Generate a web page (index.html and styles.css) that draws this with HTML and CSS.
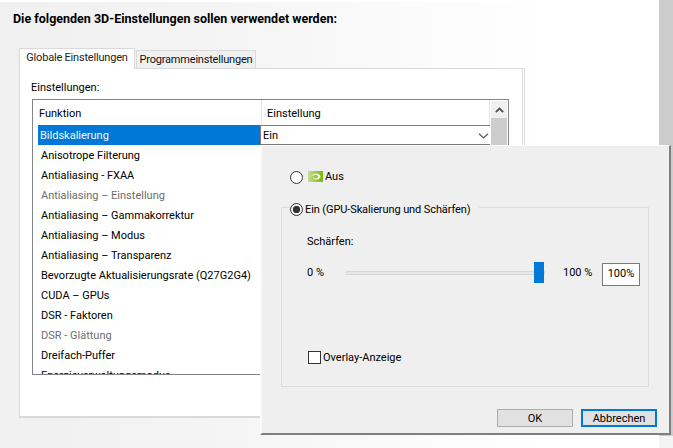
FILE: index.html
```html
<!DOCTYPE html>
<html lang="de">
<head>
<meta charset="utf-8">
<title>3D-Einstellungen</title>
<link rel="stylesheet" href="styles.css">
</head>
<body>
<div class="page">
  <main class="main">
    <h1 class="heading">Die folgenden 3D-Einstellungen sollen verwendet werden:</h1>
    <div class="tabs">
      <div class="tab tab-active">Globale Einstellungen</div>
      <div class="tab">Programmeinstellungen</div>
    </div>
    <section class="panel">
      <div class="panel-label">Einstellungen:</div>
      <div class="list">
        <div class="list-body">
          <div class="list-head">
            <div class="col-func">Funktion</div>
            <div class="col-set">Einstellung</div>
          </div>
          <div class="row-selected">
            <div class="sel-name">Bildskalierung</div>
            <div class="combo">
              <span>Ein</span>
              <svg class="chevron" width="11" height="6" viewBox="0 0 11 6"><path d="M1 0.8 L5.5 5 L10 0.8" fill="none" stroke="#555" stroke-width="1.2"/></svg>
            </div>
          </div>
          <div class="row">Anisotrope Filterung</div>
          <div class="row">Antialiasing - FXAA</div>
          <div class="row row-off">Antialiasing – Einstellung</div>
          <div class="row">Antialiasing – Gammakorrektur</div>
          <div class="row">Antialiasing – Modus</div>
          <div class="row">Antialiasing – Transparenz</div>
          <div class="row">Bevorzugte Aktualisierungsrate (Q27G2G4)</div>
          <div class="row">CUDA – GPUs</div>
          <div class="row">DSR - Faktoren</div>
          <div class="row row-off">DSR - Glättung</div>
          <div class="row">Dreifach-Puffer</div>
          <div class="row row-clipped">Energieverwaltungsmodus</div>
        </div>
        <div class="scrollbar">
          <div class="scroll-up">
            <svg width="9" height="6" viewBox="0 0 9 6"><path d="M0.8 5.2 L4.5 1.5 L8.2 5.2" fill="none" stroke="#505050" stroke-width="1.8"/></svg>
          </div>
          <div class="scroll-thumb"></div>
        </div>
      </div>
    </section>
  </main>
  <aside class="side"><div class="side-strip"></div></aside>
</div>

<div class="dialog">
  <div class="opt-off">
    <span class="radio"></span>
    <svg class="nv" width="15" height="11" viewBox="0 0 15 11">
      <defs><linearGradient id="nvg" x1="0" x2="1" y1="0" y2="0"><stop offset="0" stop-color="#c4dc9a"/><stop offset="1" stop-color="#76b900"/></linearGradient></defs>
      <rect width="15" height="11" fill="url(#nvg)"/>
      <path d="M3 5.5 C5 2.5 8 1.8 11 3.2 C13 4.4 13 6.6 11 7.8 C8.5 9 6 8.6 4.5 7 C6 7.8 8.5 7.6 9.8 6.4 C10.6 5.4 9.6 4.2 8 4 C6.3 3.8 4.6 4.4 3 5.5 Z" fill="#eef6dd"/>
    </svg>
    <span>Aus</span>
  </div>
  <fieldset class="group">
    <legend class="legend"><span class="radio radio-on"></span><span class="legend-text">Ein (GPU-Skalierung und Schärfen)</span></legend>
    <div class="group-body">
      <div class="sharpen-label">Schärfen:</div>
      <div class="slider-row">
        <span class="min">0 %</span>
        <div class="slider"><div class="track"></div><div class="thumb"></div></div>
        <span class="max">100 %</span>
        <div class="value">100%</div>
      </div>
      <div class="overlay-row"><span class="check"></span><span>Overlay-Anzeige</span></div>
    </div>
  </fieldset>
  <div class="buttons">
    <div class="btn">OK</div>
    <div class="btn btn-default">Abbrechen</div>
  </div>
</div>
</body>
</html>
```
FILE: styles.css
```css
* { box-sizing: border-box; }
html, body { margin: 0; padding: 0; }
body {
  width: 673px;
  height: 448px;
  overflow: hidden;
  position: relative;
  font-family: Roboto, "Liberation Sans", sans-serif;
  font-size: 11px;
  color: #000;
  background: #fff;
}
.page { display: flex; height: 448px; }
.main {
  width: 659px;
  height: 448px;
  border-top: 2px solid #fff;
  padding: 10px 0 0 19px;
  background: linear-gradient(90deg, #f0f0f0 0, #f4f4f4 200px, #fdfdfd 480px, #fff 560px);
}
.side { width: 14px; background: #f3f3f3; }
.side-strip { height: 436px; background: #cccccc; }
.heading {
  margin: 0 0 0 -6px;
  height: 14px;
  line-height: 14px;
  font-size: 12.5px;
  font-weight: 700;
  white-space: nowrap;
}
.tabs { display: flex; align-items: flex-end; margin-top: 22px; height: 20px; }
.tab {
  height: 18px;
  width: 120px;
  margin-left: 1px;
  border: 1px solid #d9d9d9;
  border-bottom: 0;
  background: #f0f0f0;
  text-align: center;
  line-height: 18px;
  letter-spacing: -0.2px;
  color: #111;
  white-space: nowrap;
}
.tab-active {
  height: 21px;
  width: 116px;
  margin: 0 0 -1px;
  background: #fff;
  line-height: 18px;
  position: relative;
  z-index: 1;
  color: #222;
}
.panel {
  width: 506px;
  height: 350px;
  padding-top: 10px;
  border: 1px solid #d9d9d9;
  border-right: 3px double #dcdcdc;
  border-bottom-width: 2px;
  background: #fff;
}
.panel-label { margin-left: 11px; height: 16px; line-height: 18px; }
.list {
  display: flex;
  margin: 4px 0 0 12px;
  width: 477px;
  height: 276px;
  border: 1px solid #82848c;
  overflow: hidden;
}
.list-body { width: 457px; }
.list-head { display: flex; height: 25px; padding-left: 5px; line-height: 27px; }
.col-func { width: 224px; padding-left: 1px; border-right: 1px solid #e5e5e5; }
.col-set { flex: 1; padding-left: 5px; border-right: 1px solid #e5e5e5; }
.row-selected { display: flex; height: 20px; margin-left: 5px; }
.sel-name {
  width: 222px;
  padding-left: 2px;
  background: #0078d7;
  color: #f4f8fc;
  line-height: 21px;
}
.combo {
  display: flex;
  align-items: center;
  justify-content: space-between;
  width: 230px;
  padding: 0 1px 0 2px;
  border: 1px solid #7a7a7a;
  border-width: 1px 0 1px 1px;
  background: #fff;
}
.chevron { margin: 2px 0 0 0; }
.row { height: 20px; line-height: 22px; padding-left: 8px; white-space: nowrap; }
.row-off { color: #6d6d6d; }
.row-clipped { height: 9px; overflow: hidden; }
.scrollbar { width: 16px; margin: 1px 0 0 1px; }
.scroll-up {
  height: 17px;
  background: #f0f0f0;
  display: flex;
  align-items: center;
  justify-content: center;
}
.scroll-thumb { height: 60px; background: #cdcdcd; }

.dialog {
  position: absolute;
  left: 260px;
  top: 145px;
  width: 411px;
  height: 290px;
  padding: 21px 20px 0 20px;
  border-top: 1px solid #fff;
  border-left: 2px solid #fafafa;
  border-right: 2px solid #7f7f7f;
  border-bottom: 2px solid #7f7f7f;
  background: #efefef;
}
.radio {
  flex: none;
  width: 13px;
  height: 13px;
  border: 1px solid #333;
  border-radius: 50%;
  background: #fff;
  display: inline-block;
}
.radio-on { background: radial-gradient(circle, #333 0, #333 3.4px, #f4f4f4 4px); }
.opt-off { display: flex; align-items: center; height: 20px; margin-left: 8px; }
.nv { margin: -2px 2px 0 5px; }
.opt-off span:last-child { margin-top: -2px; }
.group {
  margin: 11px 0 0 -1px;
  width: 368px;
  height: 189px;
  padding: 0;
  border: 1px solid #dcdcdc;
  min-width: 0;
}
.group-body { padding-left: 25px; }
.legend {
  display: flex;
  align-items: center;
  gap: 2px;
  margin-left: 8px;
  padding: 4px 8px 0 0;
  height: 18px;
}
.legend-text { letter-spacing: -0.1px; }
.sharpen-label { margin-top: 17px; height: 16px; line-height: 18px; }
.slider-row { display: flex; align-items: center; height: 24px; margin-top: 13px; }
.min { width: 39px; margin-bottom: 3px; }
.slider { position: relative; width: 199px; height: 24px; }
.track {
  margin-top: 9px;
  height: 4px;
  background: #e7e7e7;
  border: 1px solid #d6d6d6;
}
.thumb {
  position: absolute;
  left: 188px;
  top: 0;
  width: 10px;
  height: 21px;
  background: #0078d7;
}
.max { margin: 0 0 3px 18px; width: 39px; }
.value {
  width: 38px;
  height: 23px;
  line-height: 19px;
  text-align: center;
  border: 1px solid #7a7a7a;
  background: #fff;
}
.overlay-row { display: flex; align-items: center; gap: 2px; margin-top: 63px; height: 16px; }
.check {
  width: 13px;
  height: 13px;
  border: 1px solid #333;
  background: #fff;
  margin-left: 1px;
}
.buttons {
  display: flex;
  justify-content: flex-end;
  gap: 8px;
  margin: 22px 0 0 0;
  width: 375px;
}
.btn {
  width: 76px;
  height: 18px;
  line-height: 17px;
  text-align: center;
  background: #e1e1e1;
  border: 1px solid #adadad;
}
.btn-default { border: 2px solid #0078d7; line-height: 15px; }
```
